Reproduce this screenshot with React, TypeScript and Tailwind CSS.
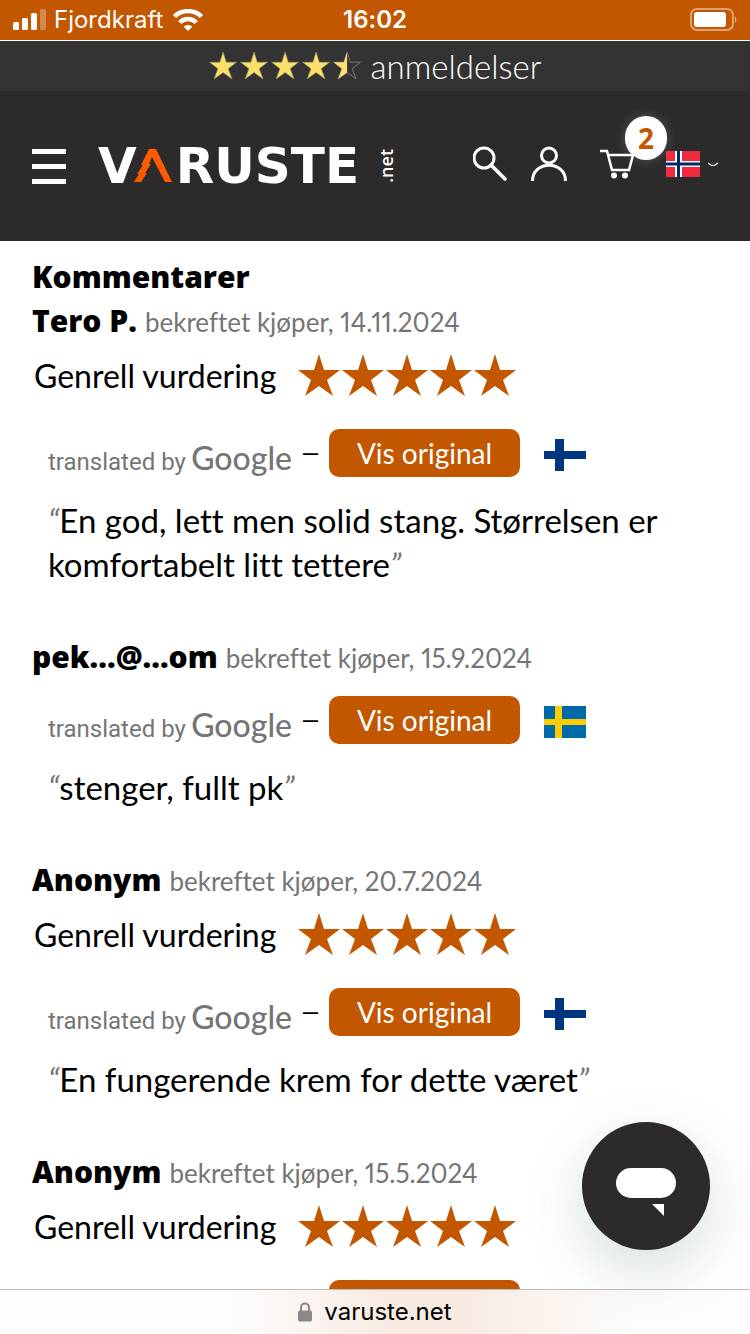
import clsx from "clsx";

type Country = "fi" | "se";

interface Review {
  author: string;
  date: string;
  rated: boolean;
  country: Country;
  text?: string;
}

const reviews: Review[] = [
  {
    author: "Tero P.",
    date: "14.11.2024",
    rated: true,
    country: "fi",
    text: "En god, lett men solid stang. Størrelsen er komfortabelt litt tettere",
  },
  { author: "pek...@...om", date: "15.9.2024", rated: false, country: "se", text: "stenger, fullt pk" },
  { author: "Anonym", date: "20.7.2024", rated: true, country: "fi", text: "En fungerende krem for dette været" },
  { author: "Anonym", date: "15.5.2024", rated: true, country: "fi" },
];

const STAR = "22,0 27,16 43,16 30,26 36,42 22,32 8,42 14,26 1,16 17,16";

const StatusBar = () => (
  <div className="grid h-10 shrink-0 grid-cols-3 items-center bg-[#c25700] px-3 font-['Inter',sans-serif] text-white">
    <div className="flex items-center">
      <svg width="34" height="22" viewBox="0 0 34 22" fill="currentColor" aria-hidden="true">
        <rect x="1" y="13" width="6" height="8" rx="1.5" />
        <rect x="10" y="9" width="6" height="12" rx="1.5" />
        <rect x="19" y="4" width="6" height="17" rx="1.5" />
        <rect x="28" y="0" width="6" height="21" rx="1.5" opacity="0.3" />
      </svg>
      <span className="ml-2 text-2xl">Fjordkraft</span>
      <svg className="ml-[10px]" width="30" height="22" viewBox="0 0 30 22" fill="none" stroke="currentColor" strokeWidth="4.500" aria-hidden="true">
        <path d="M1.5 7.5 C9 .3 21 .3 28.5 7.5" />
        <path d="M6.7 13.500 C11.5 8.8 18.5 8.8 23.3 13.500" />
        <path d="M15 22 L10.7 17.7 C13 15.3 17 15.3 19.3 17.7 Z" fill="currentColor" stroke="none" />
      </svg>
    </div>
    <span className="text-center text-2xl font-semibold">16:02</span>
    <svg className="justify-self-end" width="48" height="24" viewBox="0 0 48 24" fill="none" aria-hidden="true">
      <rect x="1" y="1" width="42" height="21" rx="6" stroke="#fff" strokeOpacity="0.45" strokeWidth="2" />
      <rect x="4" y="4" width="32" height="15" rx="3" fill="#fff" />
      <path d="M45 8 Q48 11.500 45 15 Z" fill="#fff" fillOpacity="0.5" />
    </svg>
  </div>
);

const RatingStrip = () => (
  <div className="flex h-[51px] shrink-0 items-center justify-center gap-2 border-t border-white bg-[#333333] text-white">
    <svg width="154" height="28" viewBox="0 0 154 28" aria-label="4,5 av 5 stjerner">
      <defs>
        <clipPath id="half-star">
          <rect width="22" height="44" />
        </clipPath>
      </defs>
      {[0, 1, 2, 3].map((i) => (
        <polygon
          key={i}
          points={STAR}
          transform={`translate(${i * 31} 0) scale(.64)`}
          fill="#fde06a"
          stroke="#9b9468"
        />
      ))}
      <g transform="translate(124 0) scale(.64)">
        <polygon points={STAR} fill="none" stroke="#777" strokeWidth="1.5" />
        <polygon points={STAR} fill="#fde06a" clipPath="url(#half-star)" />
      </g>
    </svg>
    <a href="#anmeldelser" className="text-[33px] leading-10 font-light">
      anmeldelser
    </a>
  </div>
);

const Logo = () => (
  <a
    href="/"
    aria-label="Varuste.net"
    className="flex w-[294px] items-center font-['DejaVu_Sans',sans-serif] text-[50px] leading-none text-white"
  >
    <span className="font-bold">V</span>
    <svg className="-ml-1" width="39" height="34" viewBox="0 0 39 34" fill="#ff5a00" aria-hidden="true">
      <path d="M16 0 H23 L39 33 H32 L19 8 L16 15 L18 15 L12 24 L14 24 L8 33 H1 L6 25 L4 25 L10 16 L8 16 Z" />
    </svg>
    <span className="ml-1 font-bold">RUSTE</span>
    <span className="ml-auto rotate-180 font-['Open_Sans',sans-serif] text-lg leading-3 font-semibold [writing-mode:vertical-rl]">
      .net
    </span>
  </a>
);

const NorwegianFlag = () => (
  <svg width="34" height="26" viewBox="0 0 34 26" aria-hidden="true">
    <rect width="34" height="26" fill="#ef2b3d" />
    <path d="M9 0h7v26H9zM0 10h34v6H0z" fill="#fff" />
    <path d="M11 0h3v26h-3zM0 11.500h34v3H0z" fill="#002868" />
  </svg>
);

const Header = () => (
  <header className="flex h-[150px] shrink-0 items-center bg-[#2c2a2b] pr-[31px] pl-8 text-white">
    <button aria-label="Meny" className="flex w-[34px] flex-col gap-[10px]">
      <span className="h-[5px] w-full bg-white" />
      <span className="h-[5px] w-full bg-white" />
      <span className="h-[5px] w-full bg-white" />
    </button>
    <div className="ml-8">
      <Logo />
    </div>
    <div className="ml-auto flex items-center pb-1">
      <button aria-label="Søk">
        <svg width="34" height="36" viewBox="0 0 34 36" fill="none" stroke="currentColor" strokeWidth="3">
          <circle cx="11" cy="12" r="10" />
          <path d="M18 19 L32 33" strokeWidth="3.500" strokeLinecap="round" />
        </svg>
      </button>
      <button aria-label="Min konto" className="ml-6">
        <svg width="36" height="36" viewBox="0 0 36 36" fill="none" stroke="currentColor" strokeWidth="3">
          <circle cx="18" cy="9.500" r="7.500" />
          <path d="M1.500 35 C1.500 14 34.500 14 34.500 35" />
        </svg>
      </button>
      <button aria-label="Handlekurv, 2 varer" className="relative ml-[33px]">
        <svg width="34" height="32" viewBox="0 0 34 32" fill="none" stroke="currentColor" strokeWidth="2.500">
          <path d="M0 3 H7 L12 22 H29 L33 7 H8" />
          <circle cx="14" cy="27.500" r="3" fill="currentColor" stroke="none" />
          <circle cx="25" cy="27.500" r="3" fill="currentColor" stroke="none" />
        </svg>
        <span className="absolute -top-8 left-[25px] flex h-11 w-[42px] items-center justify-center rounded-full bg-white font-['Open_Sans',sans-serif] text-[28px] font-bold text-[#c25700] shadow-[0_0_12px_rgba(255,255,255,0.2)]">
          2
        </span>
      </button>
      <button aria-label="Velg land" className="ml-8 flex items-center gap-[7px]">
        <NorwegianFlag />
        <svg width="12" height="5" viewBox="0 0 12 5" fill="none" stroke="currentColor" strokeWidth="1.200">
          <path d="M1 1 L4 3 Q6 4 8 3 L11 1" />
        </svg>
      </button>
    </div>
  </header>
);

const Flag = ({ country }: { country: Country }) => {
  const isSwedish = country === "se";

  return (
    <svg width="42" height="32" viewBox="0 0 42 32" role="img" aria-label={isSwedish ? "Sverige" : "Finland"}>
      <rect width="42" height="32" fill={isSwedish ? "#0069a7" : "#fff"} />
      <path
        d={isSwedish ? "M11 0h7v32h-7zM0 13h42v6H0z" : "M11 0h9v32h-9zM0 12h42v8H0z"}
        fill={isSwedish ? "#fecc02" : "#003580"}
      />
    </svg>
  );
};

const Stars = () => (
  <div className="flex" role="img" aria-label="5 av 5 stjerner">
    {[1, 2, 3, 4, 5].map((n) => (
      <svg key={n} width="44" height="44" viewBox="0 0 44 44" fill="#c25700">
        <polygon points={STAR} />
      </svg>
    ))}
  </div>
);

const ReviewItem = ({ review }: { review: Review }) => (
  <li className="mb-[49px]">
    <div className="flex h-11 items-baseline gap-2 leading-[44px]">
      <strong className="font-['Open_Sans',sans-serif] text-[30px] font-extrabold">{review.author}</strong>
      <span className="text-[26px] text-[#757575] proportional-nums">bekreftet kjøper, {review.date}</span>
    </div>
    {review.rated && (
      <div className="mt-[11px] flex h-11 items-center pl-[2px]">
        <span className="w-[263px]">Genrell vurdering</span>
        <Stars />
      </div>
    )}
    <div className={clsx("flex h-12 items-center pl-4", review.rated ? "mt-[31px]" : "mt-[17px]")}>
      <div className="flex w-[244px] items-baseline justify-between pt-3 leading-9 text-[#757575]">
        <span className="font-['Roboto',sans-serif] text-2xl">translated by</span>
        <span className="text-[32px] font-medium">Google</span>
      </div>
      <span className="w-[37px] pb-1 text-center font-['Open_Sans',sans-serif] text-4xl font-light">–</span>
      <button className="h-12 w-[191px] rounded-[10px] bg-[#c25700] text-[28px] text-white">
        Vis original
      </button>
      <span className="ml-6 pt-1">
        <Flag country={review.country} />
      </span>
    </div>
    {review.text && (
      <blockquote className="mt-[21px] pr-8 pl-4 text-[33px] leading-[44px]">
        <span className="text-[#757575] italic">“</span>
        {review.text}
        <span className="text-[#757575] italic">”</span>
      </blockquote>
    )}
  </li>
);

const ChatButton = () => (
  <button
    aria-label="Åpne chat"
    className="absolute right-10 bottom-[39px] flex size-32 items-center justify-center rounded-full bg-[#2c2a2b] pt-3 shadow-[0_20px_60px_rgba(23,73,77,0.18)]"
  >
    <svg width="60" height="48" viewBox="0 0 60 48" fill="#fff">
      <rect width="60" height="30" rx="15" />
      <path d="M36 36H48V48Z" />
    </svg>
  </button>
);

const AddressBar = () => (
  <footer className="flex h-[45px] shrink-0 items-center justify-center gap-3 border-t border-[#bfbfbf] bg-[linear-gradient(90deg,#fdfdfd_30%,#f8ebe2_52%,#f8ebe2_62%,#fdfdfd_85%)] font-['Inter',sans-serif] text-2xl text-black">
    <svg width="14" height="20" viewBox="0 0 14 20" aria-hidden="true">
      <path d="M3 10V5.500a4 4 0 0 1 8 0V10" fill="none" stroke="#8a8789" strokeWidth="2" />
      <rect y="8.500" width="14" height="11" rx="2" fill="#8a8789" />
    </svg>
    <span>varuste.net</span>
  </footer>
);

const App = () => {
  return (
    <div className="flex h-screen flex-col bg-white font-['Lato',sans-serif] text-[32px] text-black [font-variant-ligatures:none]">
      <StatusBar />
      <RatingStrip />
      <Header />
      <div className="relative min-h-0 flex-1">
        <main className="h-full overflow-y-auto px-8 pt-[14px] [scrollbar-width:none]">
          <h2 className="font-['Open_Sans',sans-serif] text-[30px] leading-[44px] font-extrabold">Kommentarer</h2>
          <ul>
            {reviews.map((review) => (
              <ReviewItem key={review.date} review={review} />
            ))}
          </ul>
        </main>
        <ChatButton />
      </div>
      <AddressBar />
    </div>
  );
};

export default App;
